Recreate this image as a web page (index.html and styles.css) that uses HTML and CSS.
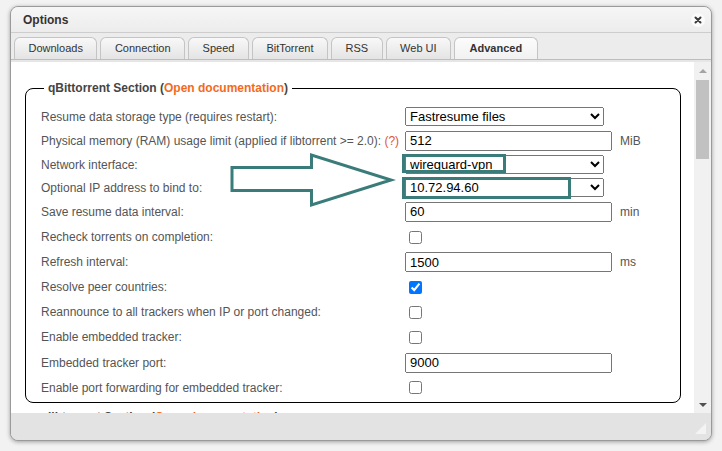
FILE: index.html
```html
<!DOCTYPE html>
<html>
<head>
<meta charset="utf-8">
<title>Options</title>
<link rel="stylesheet" href="styles.css">
</head>
<body>
<div class="window">
  <div class="titlebar">
    <span class="title">Options</span>
    <svg class="close" width="14" height="14" viewBox="0 0 14 14">
      <circle cx="7" cy="7" r="7" fill="#fbfbfb"/>
      <path d="M4.5 4.5 L9.5 9.5 M9.5 4.5 L4.5 9.5" stroke="#3a3a3a" stroke-width="2" stroke-linecap="round"/>
    </svg>
  </div>
  <div class="tabs">
    <div class="tab">Downloads</div>
    <div class="tab">Connection</div>
    <div class="tab">Speed</div>
    <div class="tab">BitTorrent</div>
    <div class="tab">RSS</div>
    <div class="tab">Web UI</div>
    <div class="tab active">Advanced</div>
  </div>
  <div class="body">
    <div class="scroll">
      <fieldset class="section">
        <legend>qBittorrent Section (<a class="doc" href="#">Open documentation</a>)</legend>
        <div class="row r-sel">
          <label class="lbl">Resume data storage type (requires restart):</label>
          <select class="sel"><option>Fastresume files</option></select>
        </div>
        <div class="row r-in">
          <label class="lbl">Physical memory (RAM) usage limit (applied if libtorrent &gt;= 2.0): <span class="help">(?)</span></label>
          <input class="txt" type="text" value="512">
          <span class="unit">MiB</span>
        </div>
        <div class="row r-sel">
          <label class="lbl">Network interface:</label>
          <select class="sel"><option>wireguard-vpn</option></select>
        </div>
        <div class="row r-sel">
          <label class="lbl">Optional IP address to bind to:</label>
          <select class="sel"><option>10.72.94.60</option></select>
        </div>
        <div class="row r-in">
          <label class="lbl">Save resume data interval:</label>
          <input class="txt" type="text" value="60">
          <span class="unit">min</span>
        </div>
        <div class="row r-cb">
          <label class="lbl">Recheck torrents on completion:</label>
          <input type="checkbox">
        </div>
        <div class="row r-in">
          <label class="lbl">Refresh interval:</label>
          <input class="txt" type="text" value="1500">
          <span class="unit">ms</span>
        </div>
        <div class="row r-cb">
          <label class="lbl">Resolve peer countries:</label>
          <input type="checkbox" checked>
        </div>
        <div class="row r-cb">
          <label class="lbl">Reannounce to all trackers when IP or port changed:</label>
          <input type="checkbox">
        </div>
        <div class="row r-cb">
          <label class="lbl">Enable embedded tracker:</label>
          <input type="checkbox">
        </div>
        <div class="row r-in">
          <label class="lbl">Embedded tracker port:</label>
          <input class="txt" type="text" value="9000">
        </div>
        <div class="row r-cb">
          <label class="lbl">Enable port forwarding for embedded tracker:</label>
          <input type="checkbox">
        </div>
      </fieldset>
      <fieldset class="section next">
        <legend>libtorrent Section (<a class="doc" href="#">Open documentation</a>)</legend>
        <div class="row r-in">
          <label class="lbl">Asynchronous I/O threads:</label>
          <input class="txt" type="text" value="10">
        </div>
      </fieldset>
    </div>
    <div class="scrollbar">
      <div class="sb-btn"><span class="tri up"></span></div>
      <div class="sb-thumb"></div>
      <div class="sb-fill"></div>
      <div class="sb-btn"><span class="tri down"></span></div>
    </div>
  </div>
  <div class="footer">
    <svg class="grip" width="11" height="11" viewBox="0 0 11 11">
      <polygon points="11,0 11,11 0,11" fill="#f3f3f3"/>
    </svg>
  </div>
</div>
<svg class="annot" width="722" height="451" viewBox="0 0 722 451">
  <polygon points="232,167.5 311.5,167.5 311.5,155 391,180 311.5,205 311.5,190.5 232,190.5" fill="none" stroke="#3a7c7a" stroke-width="3" stroke-linejoin="miter"/>
  <rect x="403.5" y="155.5" width="101" height="16" fill="none" stroke="#3a7c7a" stroke-width="3"/>
  <rect x="403.5" y="178.5" width="166" height="19" fill="none" stroke="#3a7c7a" stroke-width="3"/>
</svg>
</body>
</html>
```
FILE: styles.css
```css
html, body {
  margin: 0;
  padding: 0;
}
body {
  background: #f2f2f2;
  font-family: "Liberation Sans", Arial, sans-serif;
  width: 722px;
  height: 451px;
  overflow: hidden;
  position: relative;
}
.window {
  box-sizing: border-box;
  margin: 6px 0 0 10px;
  width: 702px;
  height: 435px;
  border: 1px solid #9a9a9a;
  border-radius: 8px;
  box-shadow: 0 1px 4px rgba(0, 0, 0, 0.35);
  background: #e3e3e3;
  display: flex;
  flex-direction: column;
  overflow: hidden;
}
.titlebar {
  height: 25px;
  flex: none;
  display: flex;
  align-items: center;
  justify-content: space-between;
  padding: 0 6px 0 12px;
  background: linear-gradient(#f6f6f6, #ececec);
  border-bottom: 1px solid #cdcdcd;
}
.title {
  font-size: 12px;
  font-weight: bold;
  color: #333;
}
.close {
  display: block;
}
.tabs {
  height: 27px;
  flex: none;
  box-sizing: border-box;
  display: flex;
  align-items: flex-end;
  gap: 3px;
  padding-left: 3px;
  background: #ececec;
  border-bottom: 1px solid #bdbdbd;
}
.tab {
  height: 22px;
  box-sizing: border-box;
  padding: 0 13.5px;
  border: 1px solid #c4c4c4;
  border-bottom: none;
  border-radius: 6px 6px 0 0;
  background: linear-gradient(#f8f8f8, #e4e4e4);
  font-size: 11px;
  line-height: 21px;
  color: #333;
}
.tab.active {
  padding: 0 14.5px;
  background: linear-gradient(#fcfcfc, #f1f1f1);
  font-weight: bold;
}
.body {
  flex: 1;
  display: flex;
  min-height: 0;
  border-top: 2px solid #e6e6e6;
}
.scroll {
  flex: 1;
  background: #fff;
  overflow: hidden;
  padding-top: 19px;
}
.section {
  margin: 0 13px 0 14px;
  padding: 9px 14px 2px 15px;
  border: 1px solid #000;
  border-radius: 8px;
  min-width: 0;
}
.section legend {
  margin-left: 3px;
  padding: 0 4px;
  font-size: 12px;
  font-weight: bold;
  line-height: 15px;
  color: #444;
}
.section.next {
  margin-top: 7px;
}
.doc {
  color: #f36a1e;
  text-decoration: none;
}
.row {
  display: flex;
  align-items: center;
}
.r-sel {
  height: 23px;
}
.r-in {
  height: 25.3px;
}
.r-cb {
  height: 25px;
}
.lbl {
  flex: none;
  width: 364px;
  font-size: 12px;
  color: #555;
}
.help {
  color: #e0553a;
}
.sel {
  width: 199px;
  height: 19px;
  margin: 0;
  font-family: "Liberation Sans", Arial, sans-serif;
  font-size: 13px;
  color: #000;
}
.txt {
  box-sizing: border-box;
  width: 207px;
  height: 20px;
  margin: 0;
  padding: 0 3px;
  font-family: "Liberation Sans", Arial, sans-serif;
  font-size: 13px;
  color: #000;
}
.row input[type="checkbox"] {
  margin: 0 0 0 4px;
  width: 13px;
  height: 13px;
}
.unit {
  margin-left: 8px;
  font-size: 12px;
  color: #555;
}
.scrollbar {
  width: 17px;
  flex: none;
  background: #f1f1f1;
  display: flex;
  flex-direction: column;
}
.sb-btn {
  height: 17px;
  flex: none;
  display: flex;
  align-items: center;
  justify-content: center;
}
.sb-thumb {
  height: 79px;
  margin: 1px 2px 0 2px;
  background: #c1c1c1;
  flex: none;
}
.sb-fill {
  flex: 1;
}
.tri {
  width: 0;
  height: 0;
  border-left: 4px solid transparent;
  border-right: 4px solid transparent;
}
.tri.up {
  border-bottom: 4px solid #a3a3a3;
}
.tri.down {
  border-top: 4px solid #505050;
}
.footer {
  height: 27px;
  flex: none;
  background: #e3e3e3;
  display: flex;
  justify-content: flex-end;
  align-items: flex-end;
  padding: 0 5px 6px 0;
  box-sizing: border-box;
}
.grip {
  display: block;
}
.annot {
  position: absolute;
  left: 0;
  top: 0;
  pointer-events: none;
}
```
